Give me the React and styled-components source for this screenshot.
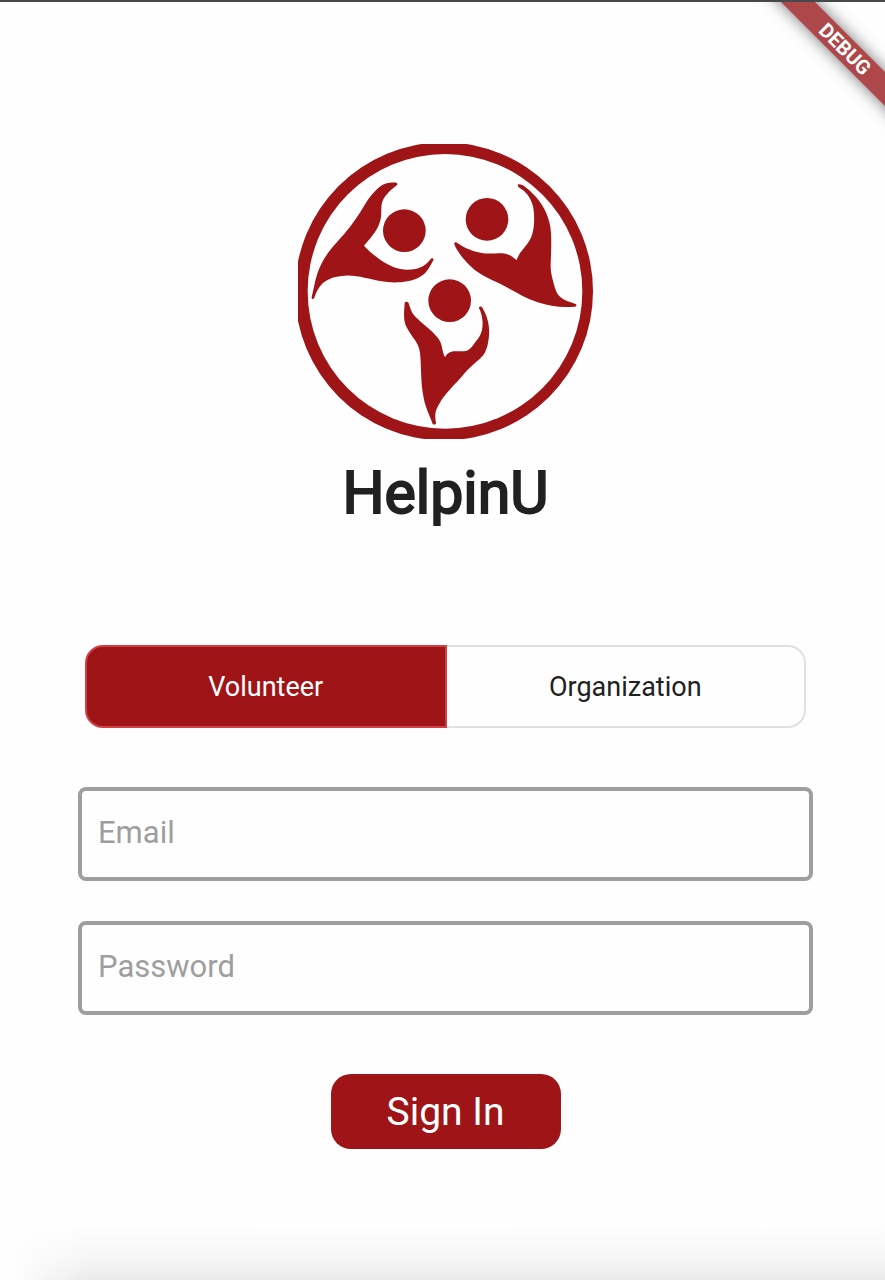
import React, { useState } from 'react'
import styled, { createGlobalStyle } from 'styled-components'

const brand = '#9f1416'

const GlobalStyle = createGlobalStyle`
  * {
    box-sizing: border-box;
  }

  body {
    margin: 0;
    background: #fefefe;
    color: #212121;
    font-family: Roboto, 'Liberation Sans', sans-serif;
  }
`

const Page = styled.div`
  position: relative;
  min-height: 100vh;
  overflow: hidden;
  border-top: 2px solid #47484c;
  background:
    linear-gradient(to right, #fefefe 10px, transparent 90px) bottom / 100% 60px no-repeat,
    linear-gradient(to top, #ebebeb, #f5f5f5 20px, #fefefe 54px) bottom / 100% 60px no-repeat,
    #fefefe;
`

const Corner = styled.div`
  position: absolute;
  top: 0;
  right: 0;
  width: 160px;
  height: 160px;
  overflow: hidden;
  pointer-events: none;
`

const Ribbon = styled.div`
  position: absolute;
  top: 35px;
  right: -60px;
  width: 200px;
  transform: rotate(45deg);
  background: #ae474a;
  box-shadow: 0 0 16px rgba(0, 0, 0, 0.55);
  color: #fff;
  font-size: 20px;
  font-weight: 700;
  line-height: 24px;
  text-align: center;
`

const Main = styled.main`
  display: flex;
  flex-direction: column;
  align-items: center;
  padding: 142px 72px 72px 78px;
`

const LogoSvg = styled.svg`
  display: block;
  width: 295px;
  height: 295px;
  fill: ${brand};
`

const Title = styled.h1`
  margin: 18px 0 116px;
  font-size: 59px;
  font-weight: 400;
  line-height: 72px;
  -webkit-text-stroke: 2px currentColor;
`

const Form = styled.form`
  display: flex;
  flex-direction: column;
  align-items: center;
  width: 100%;
`

const Roles = styled.div`
  display: flex;
  align-self: stretch;
  margin: 0 7px 59px;
`

const RoleButton = styled.button`
  flex: 1;
  height: 83px;
  padding: 0;
  border: 2px solid ${props => (props.$active ? '#cf3f45' : '#e0e0e0')};
  background: ${props => (props.$active ? brand : '#fefefe')};
  color: ${props => (props.$active ? '#fff' : '#212121')};
  font-family: inherit;
  font-size: 27px;
  cursor: pointer;

  &:first-child {
    border-radius: 18px 0 0 18px;
    ${props => !props.$active && `border-right: 0;`}
  }

  &:last-child {
    border-radius: 0 18px 18px 0;
    ${props => !props.$active && `border-left: 0;`}
  }
`

const Fields = styled.div`
  display: flex;
  flex-direction: column;
  align-self: stretch;
  gap: 40px;
  margin-bottom: 59px;
`

const Input = styled.input`
  display: block;
  width: 100%;
  height: 94px;
  padding: 0 16px 4px;
  border: 4px solid #9e9e9e;
  border-radius: 8px;
  background: #fefefe;
  color: #212121;
  font-family: inherit;
  font-size: 31px;

  &::placeholder {
    color: #9e9e9e;
    opacity: 1;
  }
`

const SubmitButton = styled.button`
  width: 230px;
  height: 75px;
  padding: 0;
  border: 0;
  border-radius: 20px;
  background: ${brand};
  color: #fff;
  font-family: inherit;
  font-size: 39px;
  cursor: pointer;
`

const Logo = () => (
  <LogoSvg viewBox="0 0 885 885" role="img" aria-label="HelpinU logo">
    <circle cx="438" cy="442" r="447" />
    <circle cx="441" cy="442" r="412" fill="#fefefe" />
    {/* left figure */}
    <g transform="translate(-24 -27)">
      <circle cx="343" cy="287" r="64" />
      <path d="M322 147C322 142 312 142 300 143C283 144 268 154 255 169C241 184 232 196 222 213C207 239 189 265 165 294C142 321 122 341 108 363C90 390 80 416 72 455L65 487C64 493 70 494 73 488C80 470 84 460 98 445C114 430 138 423 165 422C205 420 235 433 275 439C310 445 355 443 384 429C403 420 412 408 420 394L430 376C432 370 426 368 422 372C410 388 396 398 376 402C355 406 332 405 312 397C280 384 248 360 222 332C236 315 255 296 265 273C279 243 271 223 276 203C281 184 300 166 322 149Z" />
    </g>
    {/* right figure */}
    <g transform="translate(441 -27)">
      <circle cx="126" cy="253" r="64" />
      <path d="M220 148C232 146 250 162 265 178C291 203 310 239 316 276C321 308 318 355 317 387C316 415 325 440 331 462C337 481 349 491 366 498L392 507C396 510 395 515 389 515C350 519 315 514 278 502C240 489 210 470 178 453C145 436 106 423 77 394C56 373 34 347 28 328C27 321 33 320 38 325C60 340 84 350 115 355C140 357 160 353 182 356C194 358 204 368 215 375C222 350 246 334 258 308C270 280 269 239 264 214C257 186 241 168 224 159C218 156 217 151 220 148Z" />
    </g>
    {/* bottom figure */}
    <g transform="translate(-24 423)">
      <circle cx="479" cy="47" r="64" />
      <path d="M344 54C345 49 354 49 356 55C361 70 364 83 376 95C397 116 425 135 442 157C459 177 455 198 465 217C470 208 478 200 491 199C508 197 526 203 538 193C549 184 554 171 564 161C580 142 582 108 571 78L567 70C566 64 574 62 577 68C587 84 595 104 597 128C599 153 594 186 584 204C574 221 557 231 542 246C524 261 510 284 491 301C473 321 456 339 446 360C435 379 434 390 438 414C438 420 428 420 427 414C419 390 406 368 401 338C391 290 395 249 390 204C387 178 374 165 362 147C353 132 345 122 343 106C341 88 343 70 344 54Z" />
    </g>
  </LogoSvg>
)

const App = () => {
  const [role, setRole] = useState('Volunteer')
  const [email, setEmail] = useState('')
  const [password, setPassword] = useState('')

  const handleSubmit = e => {
    e.preventDefault()
  }

  return (
    <Page>
      <GlobalStyle />
      <Corner>
        <Ribbon>DEBUG</Ribbon>
      </Corner>
      <Main>
        <Logo />
        <Title>HelpinU</Title>
        <Form onSubmit={handleSubmit}>
          <Roles>
            {['Volunteer', 'Organization'].map(name => (
              <RoleButton
                key={name}
                type="button"
                $active={role === name}
                aria-pressed={role === name}
                onClick={() => setRole(name)}
              >
                {name}
              </RoleButton>
            ))}
          </Roles>
          <Fields>
            <Input
              type="email"
              aria-label="Email"
              placeholder="Email"
              value={email}
              onChange={e => setEmail(e.target.value)}
            />
            <Input
              type="password"
              aria-label="Password"
              placeholder="Password"
              value={password}
              onChange={e => setPassword(e.target.value)}
            />
          </Fields>
          <SubmitButton type="submit">Sign In</SubmitButton>
        </Form>
      </Main>
    </Page>
  )
}

export default App
